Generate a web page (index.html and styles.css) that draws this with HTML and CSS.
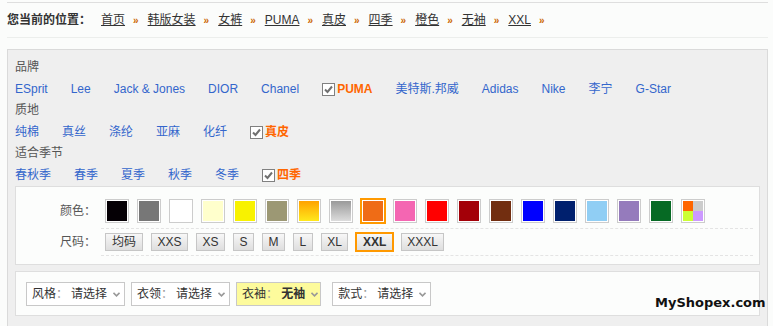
FILE: index.html
```html
<!DOCTYPE html>
<html lang="zh-CN">
<head>
    <meta charset="UTF-8">
    <title>商品筛选</title>
    <link rel="stylesheet" href="styles.css">
</head>
<body>
    <div class="crumb">
        <b class="here">您当前的位置：</b>
        <a href="#">首页</a><span class="sep">»</span>
        <a href="#">韩版女装</a><span class="sep">»</span>
        <a href="#">女裤</a><span class="sep">»</span>
        <a href="#">PUMA</a><span class="sep">»</span>
        <a href="#">真皮</a><span class="sep">»</span>
        <a href="#">四季</a><span class="sep">»</span>
        <a href="#">橙色</a><span class="sep">»</span>
        <a href="#">无袖</a><span class="sep">»</span>
        <a href="#">XXL</a><span class="sep">»</span>
    </div>

    <div class="panel">
        <div class="group-title">品牌</div>
        <div class="opts">
            <a href="#">ESprit</a>
            <a href="#">Lee</a>
            <a href="#">Jack &amp; Jones</a>
            <a href="#">DIOR</a>
            <a href="#">Chanel</a>
            <span class="picked">
                <svg class="tick" width="13" height="13" viewBox="0 0 13 13"><rect x="0.5" y="0.5" width="12" height="12" fill="#fff" stroke="#808080"/><polyline points="3,6.5 5.5,9 10,3.5" fill="none" stroke="#707070" stroke-width="2"/></svg>PUMA
            </span>
            <a href="#">美特斯.邦威</a>
            <a href="#">Adidas</a>
            <a href="#">Nike</a>
            <a href="#">李宁</a>
            <a href="#">G-Star</a>
        </div>

        <div class="group-title">质地</div>
        <div class="opts">
            <a href="#">纯棉</a>
            <a href="#">真丝</a>
            <a href="#">涤纶</a>
            <a href="#">亚麻</a>
            <a href="#">化纤</a>
            <span class="picked">
                <svg class="tick" width="13" height="13" viewBox="0 0 13 13"><rect x="0.5" y="0.5" width="12" height="12" fill="#fff" stroke="#808080"/><polyline points="3,6.5 5.5,9 10,3.5" fill="none" stroke="#707070" stroke-width="2"/></svg>真皮
            </span>
        </div>

        <div class="group-title">适合季节</div>
        <div class="opts">
            <a href="#">春秋季</a>
            <a href="#">春季</a>
            <a href="#">夏季</a>
            <a href="#">秋季</a>
            <a href="#">冬季</a>
            <span class="picked">
                <svg class="tick" width="13" height="13" viewBox="0 0 13 13"><rect x="0.5" y="0.5" width="12" height="12" fill="#fff" stroke="#808080"/><polyline points="3,6.5 5.5,9 10,3.5" fill="none" stroke="#707070" stroke-width="2"/></svg>四季
            </span>
        </div>

        <div class="spec">
            <div class="spec-row colors-row">
                <div class="spec-label">颜色：</div>
                <div class="spec-items colors">
                    <span class="sw"><i class="c-black"></i></span>
                    <span class="sw"><i class="c-gray"></i></span>
                    <span class="sw"><i class="c-white"></i></span>
                    <span class="sw"><i class="c-cream"></i></span>
                    <span class="sw"><i class="c-yellow"></i></span>
                    <span class="sw"><i class="c-olive"></i></span>
                    <span class="sw"><i class="c-gold"></i></span>
                    <span class="sw"><i class="c-silver"></i></span>
                    <span class="sw on"><i class="c-orange"></i></span>
                    <span class="sw"><i class="c-pink"></i></span>
                    <span class="sw"><i class="c-red"></i></span>
                    <span class="sw"><i class="c-darkred"></i></span>
                    <span class="sw"><i class="c-brown"></i></span>
                    <span class="sw"><i class="c-blue"></i></span>
                    <span class="sw"><i class="c-navy"></i></span>
                    <span class="sw"><i class="c-sky"></i></span>
                    <span class="sw"><i class="c-purple"></i></span>
                    <span class="sw"><i class="c-green"></i></span>
                    <span class="sw"><i class="c-mix"></i></span>
                </div>
            </div>
            <div class="spec-row sizes-row">
                <div class="spec-label">尺码：</div>
                <div class="spec-items sizes">
                    <span class="size wide">均码</span>
                    <span class="size">XXS</span>
                    <span class="size">XS</span>
                    <span class="size">S</span>
                    <span class="size">M</span>
                    <span class="size">L</span>
                    <span class="size">XL</span>
                    <span class="size on">XXL</span>
                    <span class="size">XXXL</span>
                </div>
            </div>
        </div>

        <div class="filters">
            <div class="sel">
                <span>风格</span><span class="colon">：</span><span class="sel-val">请选择</span>
                <svg class="arr" width="7" height="5" viewBox="0 0 7 5"><polyline points="0.5,0.8 3.5,3.8 6.5,0.8" fill="none" stroke="#999" stroke-width="1.6"/></svg>
            </div>
            <div class="sel">
                <span>衣领</span><span class="colon">：</span><span class="sel-val">请选择</span>
                <svg class="arr" width="7" height="5" viewBox="0 0 7 5"><polyline points="0.5,0.8 3.5,3.8 6.5,0.8" fill="none" stroke="#999" stroke-width="1.6"/></svg>
            </div>
            <div class="sel on">
                <span>衣袖</span><span class="colon">：</span><b class="sel-val">无袖</b>
                <svg class="arr" width="7" height="5" viewBox="0 0 7 5"><polyline points="0.5,0.8 3.5,3.8 6.5,0.8" fill="none" stroke="#999" stroke-width="1.6"/></svg>
            </div>
            <div class="sel">
                <span>款式</span><span class="colon">：</span><span class="sel-val">请选择</span>
                <svg class="arr" width="7" height="5" viewBox="0 0 7 5"><polyline points="0.5,0.8 3.5,3.8 6.5,0.8" fill="none" stroke="#999" stroke-width="1.6"/></svg>
            </div>
        </div>
    </div>

    <div class="mark">MyShopex.com</div>
</body>
</html>
```

FILE: styles.css
```css
body {
    margin: 0;
    height: 326px;
    overflow: hidden;
    background-color: #fbfcfb;
    color: #333;
    font-family: "Liberation Sans", "Noto Sans CJK SC", sans-serif;
    font-size: 12px;
}

/* breadcrumb */
.crumb {
    display: flex;
    align-items: center;
    margin: 2px 5px 0 7px;
    padding: 6px 0;
    line-height: 20px;
    border-top: 1px solid #dedede;
    border-bottom: 1px solid #eceeec;
}

.here {
    margin-right: 10px;
    color: #333;
}

.crumb a {
    color: #333;
    text-decoration: underline;
}

.sep {
    margin: 2px 9px 0 8px;
    color: #cc6600;
    font-size: 10px;
    font-weight: bold;
}

/* filter panel */
.panel {
    margin: 11px 5px 0 7px;
    padding: 7px 7px 30px 7px;
    background-color: #efefef;
    border: 1px solid #dadada;
}

.group-title {
    line-height: 21px;
    color: #555;
}

.opts {
    display: flex;
    align-items: center;
    gap: 23px;
    line-height: 22px;
}

.opts a {
    color: #3366cc;
    text-decoration: none;
}

.picked {
    display: flex;
    align-items: center;
    gap: 2px;
    color: #ff6600;
    font-weight: bold;
}

.tick {
    display: block;
}

/* colours and sizes */
.spec {
    padding: 0 6px 8px 0;
    background-color: #fcfdfc;
    border: 1px solid #dedede;
}

.spec-row {
    display: flex;
    align-items: flex-start;
}

.spec-label {
    width: 85px;
    padding-right: 5px;
    box-sizing: border-box;
    text-align: right;
    color: #555;
}

.colors-row .spec-label {
    padding-top: 12px;
    line-height: 24px;
}

.sizes-row .spec-label {
    padding-top: 4px;
    line-height: 18px;
}

.spec-items {
    flex: 1;
    display: flex;
    align-items: center;
    gap: 8px;
    border-bottom: 1px dashed #e4e4e4;
}

.colors {
    padding: 12px 0 5px 4px;
}

.sizes {
    padding: 4px 0 4px 4px;
}

.sw {
    display: block;
    padding: 1px;
    background-color: #fff;
    border: 1px solid #ccc;
}

.sw.on {
    margin: -1px;
    border: 2px solid #ff9900;
}

.sw i {
    display: block;
    width: 20px;
    height: 20px;
}

.c-black { background-color: #050005; }
.c-gray { background-color: #777; }
.c-white { background-color: #fff; }
.c-cream { background-color: #ffffcc; }
.c-yellow { background-color: #f8f200; }
.c-olive { background-color: #9c9874; }
.c-gold { background: linear-gradient(#ffa200, #ffe81c); }
.c-silver { background: linear-gradient(#9a9a9a, #dcdcdc); }
.c-orange { background-color: #ef6c16; }
.c-pink { background-color: #f466b2; }
.c-red { background-color: #ff0000; }
.c-darkred { background-color: #a30008; }
.c-brown { background-color: #722e10; }
.c-blue { background-color: #0000ff; }
.c-navy { background-color: #00206e; }
.c-sky { background-color: #90cef4; }
.c-purple { background-color: #957bbc; }
.c-green { background-color: #066a24; }

.c-mix {
    background:
        linear-gradient(90deg, #ff6600 50%, #cccccc 50%) top / 100% 50% no-repeat,
        linear-gradient(90deg, #ccff33 50%, #cc99ff 50%) bottom / 100% 50% no-repeat;
}

.size {
    height: 16px;
    padding: 0 5.5px;
    line-height: 16px;
    color: #333;
    background: linear-gradient(#f7f7f7, #dedede);
    border: 1px solid #c6c6c6;
}

.size.wide {
    padding: 0 6px;
}

.size.on {
    margin: -1px;
    border: 2px solid #ff9900;
    font-weight: bold;
}

/* select boxes */
.filters {
    display: flex;
    gap: 6px;
    margin-top: 6px;
    padding: 10px 7px 9px 10px;
    background-color: #fcfdfc;
    border: 1px solid #dedede;
}

.sel {
    display: flex;
    align-items: center;
    height: 22px;
    padding: 0 4px 0 5px;
    line-height: 22px;
    background-color: #fff;
    border: 1px solid #c8c8c8;
}

.sel.on {
    padding-right: 2px;
    margin-right: 5px;
    background-color: #fdfb9c;
}

.colon {
    color: #999;
}

.sel-val {
    margin-left: 3px;
}

.arr {
    display: block;
    margin-left: 6px;
}

.mark {
    position: absolute;
    left: 655px;
    top: 296px;
    font-family: "DejaVu Sans", sans-serif;
    font-size: 13px;
    font-weight: bold;
    line-height: 13px;
    color: #111;
}
```
